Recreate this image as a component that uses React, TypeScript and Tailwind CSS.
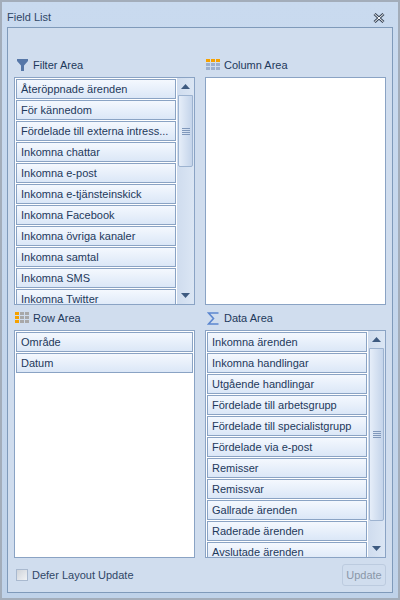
import React from "react";

const filterItems = ["Återöppnade ärenden","För kännedom","Fördelade till externa intress...","Inkomna chattar","Inkomna e-post","Inkomna e-tjänsteinskick","Inkomna Facebook","Inkomna övriga kanaler","Inkomna samtal","Inkomna SMS","Inkomna Twitter"];
const rowItems = ["Område","Datum"];
const dataItems = ["Inkomna ärenden","Inkomna handlingar","Utgående handlingar","Fördelade till arbetsgrupp","Fördelade till specialistgrupp","Fördelade via e-post","Remisser","Remissvar","Gallrade ärenden","Raderade ärenden","Avslutade ärenden"];

function Item({ text }: { text: string }) {
  return (
    <div className="h-5 shrink-0 border border-[#8aa3c4] bg-gradient-to-b from-[#f4f8fe] to-[#dbe7f7] pl-[4px] text-[11px] leading-[18px] text-[#1e395b] whitespace-nowrap overflow-hidden">
      {text}
    </div>
  );
}

function Scrollbar({ thumbHeight }: { thumbHeight: string }) {
  return (
    <div className="w-[17px] shrink-0 flex flex-col items-center bg-gradient-to-r from-[#cfdcee] to-[#dbe6f4] h-full">
      <div className="h-[17px] w-full shrink-0 flex items-center justify-center">
        <svg width="9" height="5" viewBox="0 0 9 5"><path d="M4.5 0 L9 5 L0 5 Z" fill="#3d5a80" /></svg>
      </div>
      <div className={`w-[15px] shrink-0 border border-[#9db3d0] rounded-b-[2px] bg-gradient-to-r from-[#e6eef9] to-[#c4d4ea] flex items-center justify-center ${thumbHeight}`}>
        <svg width="8" height="7" viewBox="0 0 8 7"><path d="M0 .5H8M0 2.5H8M0 4.5H8M0 6.5H8" stroke="#8098bb" strokeWidth="1" /></svg>
      </div>
      <div className="flex-1" />
      <div className="h-[17px] w-full shrink-0 flex items-center justify-center">
        <svg width="9" height="5" viewBox="0 0 9 5"><path d="M0 0 L9 0 L4.5 5 Z" fill="#3d5a80" /></svg>
      </div>
    </div>
  );
}

function ListBox({ items, scroll, thumbHeight }: { items: string[]; scroll?: boolean; thumbHeight?: string }) {
  return (
    <div className="h-[228px] border border-[#8aa3c4] bg-white flex overflow-hidden">
      <div className="flex-1 min-w-0 flex flex-col gap-px p-px overflow-hidden">
        {items.map((t) => <Item key={t} text={t} />)}
      </div>
      {scroll && <Scrollbar thumbHeight={thumbHeight ?? "h-[72px]"} />}
    </div>
  );
}

function Grid3({ cells }: { cells: string[] }) {
  return (
    <svg width="14" height="12" viewBox="0 0 14 12" className="shrink-0">
      {cells.map((c, i) => {
        const x = (i % 3) * 5;
        const y = Math.floor(i / 3) * 4;
        return <rect key={i} x={x} y={y} width="4" height="3" fill={c} />;
      })}
    </svg>
  );
}

function Label({ icon, text, indent, iconBox }: { icon: React.ReactNode; text: string; indent: string; iconBox: string }) {
  return (
    <div className={`h-5 flex items-center pb-[4px] text-[11px] text-[#1e395b] ${indent}`}>
      <div className={`shrink-0 flex items-center ${iconBox}`}>{icon}</div>
      <span>{text}</span>
    </div>
  );
}

const o = "#f5a100";
const b = "#9db0ce";
const g = "#a8a8a8";

export default function App() {
  return (
    <div className="w-[400px] h-[600px] border-2 border-[#a3adba] bg-gradient-to-b from-[#c9daef] to-[#bfd2e9] flex flex-col overflow-hidden" style={{ fontFamily: '"Liberation Sans", Arial, sans-serif' }}>
      <div className="h-[25px] shrink-0 flex items-center justify-between pt-[6px] pl-[5px] pr-[13px] text-[11px]">
        <span className="text-[#2f4666]">Field List</span>
        <svg width="12" height="10" viewBox="0 0 12 10">
          <path d="M1.5 1 L10.5 9 M10.5 1 L1.5 9" stroke="#3e4c5f" strokeWidth="3" />
          <path d="M1.5 1 L10.5 9 M10.5 1 L1.5 9" stroke="#ffffff" strokeWidth="1" />
        </svg>
      </div>
      <div className="w-[386px] ml-[5px] h-[566px] shrink-0 border border-[#7f9aba] bg-[#d0ddee] pt-[29px] pl-[6px] pr-[6px] flex flex-col">
        <div className="grid grid-cols-[181px_181px] gap-x-[10px]">
          <div>
            <Label text="Filter Area" indent="pl-[3px]" iconBox="w-[16px]" icon={
              <svg width="11" height="12" viewBox="0 0 11 12"><path d="M0 0H11V2L7 6.5V12H4V6.5L0 2Z" fill="#5677a8" /></svg>
            } />
            <ListBox items={filterItems} scroll thumbHeight="h-[72px]" />
          </div>
          <div>
            <Label text="Column Area" indent="pl-[1px]" iconBox="w-[18px]" icon={<Grid3 cells={[o,o,o,b,b,b,b,b,b]} />} />
            <ListBox items={[]} />
          </div>
          <div className="mt-[5px]">
            <Label text="Row Area" indent="pl-[1px]" iconBox="w-[18px]" icon={<Grid3 cells={[o,g,g,o,g,g,o,g,g]} />} />
            <ListBox items={rowItems} />
          </div>
          <div className="mt-[5px]">
            <Label text="Data Area" indent="pl-[2px]" iconBox="w-[17px]" icon={
              <svg width="12" height="13" viewBox="0 0 12 13"><path d="M11.5 1H1.5L6.5 6.5L1.5 12H11.5" fill="none" stroke="#5b86cf" strokeWidth="1.6" /></svg>
            } />
            <ListBox items={dataItems} scroll thumbHeight="h-[173px]" />
          </div>
        </div>
        <div className="flex items-center justify-between mt-[6px] h-[22px]">
          <label className="flex items-center gap-[4px] pl-[2px] text-[11px] text-[#2f4666]">
            <span className="w-3 h-3 border border-[#a9b9cf] bg-gradient-to-br from-[#d0d4da] to-[#f0f2f5]" />
            Defer Layout Update
          </label>
          <div className="w-[44px] h-[22px] border border-[#bccbdf] rounded-[3px] flex items-center justify-center text-[11px] text-[#8a97a8]">Update</div>
        </div>
      </div>
    </div>
  );
}
